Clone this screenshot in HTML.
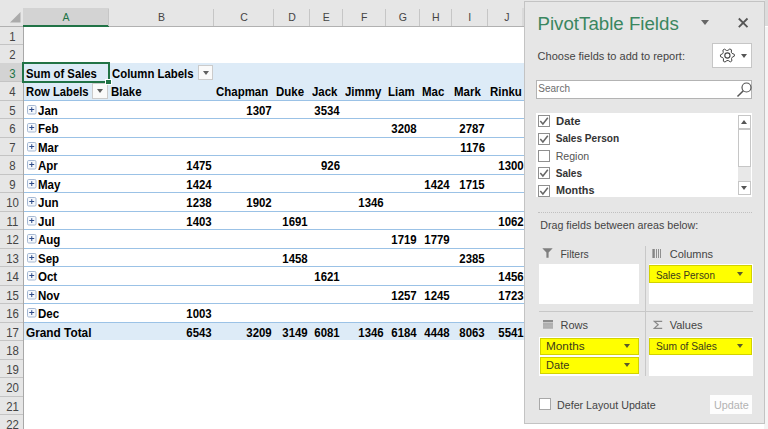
<!DOCTYPE html><html><head><meta charset="utf-8"><style>
*{margin:0;padding:0;box-sizing:border-box}
html,body{width:768px;height:429px;overflow:hidden;background:#fff;font-family:"Liberation Sans",sans-serif}
.a{position:absolute}
.t{position:absolute;white-space:nowrap;line-height:16px}
.b{font-weight:bold;color:#000}
.pt{color:#444}
.pb{position:absolute;width:9px;height:9px;border:1px solid #9fb3cf;border-radius:1.5px;background:#f7f9fc}
.pb:before{content:"";position:absolute;left:1px;top:3px;width:5px;height:1.5px;background:#2f4a85}
.pb:after{content:"";position:absolute;left:2.8px;top:1.2px;width:1.5px;height:5px;background:#2f4a85}
.dd{position:absolute;width:15.3px;height:15px;border:1px solid #cbcbcb;background:#fafafa}
.dd:after{content:"";position:absolute;left:3.6px;top:5px;border-left:3.4px solid transparent;border-right:3.4px solid transparent;border-top:4px solid #606060}
.cb{position:absolute;width:12px;height:12px;border:1px solid #8f8f8f;background:#fff}
.yi{position:absolute;background:#ffff00;border:1px solid #d2d200}
.tri{position:absolute;width:0;height:0;border-left:3.5px solid transparent;border-right:3.5px solid transparent;border-top:4px solid #555}
.wb{position:absolute;background:#fff}
</style></head><body><div class="a" style="left:0;top:0;width:768px;height:26px;background:#e6e6e6"></div>
<div class="a" style="left:0;top:26px;width:524px;height:1px;background:#b1b1b1"></div>
<div class="a" style="left:522px;top:8px;width:2px;height:18px;background:#dadada"></div>
<svg class="a" style="left:0;top:8px" width="23" height="18"><polygon points="20.5,4 20.5,14.5 10,14.5" fill="#ababab"/></svg>
<div class="a" style="left:23px;top:8px;width:86px;height:17px;background:#d3d3d3"></div>
<div class="a" style="left:23px;top:25px;width:86px;height:2px;background:#217346"></div>
<div class="t" style="left:23px;width:86px;text-align:center;top:9.26px;font-size:10.5px;color:#217346">A</div>
<div class="a" style="left:108px;top:9px;width:1px;height:17px;background:#c6c6c6"></div>
<div class="t" style="left:109px;width:105px;text-align:center;top:9.26px;font-size:10.5px;color:#444">B</div>
<div class="a" style="left:213px;top:9px;width:1px;height:17px;background:#c6c6c6"></div>
<div class="t" style="left:214px;width:60px;text-align:center;top:9.26px;font-size:10.5px;color:#444">C</div>
<div class="a" style="left:273px;top:9px;width:1px;height:17px;background:#c6c6c6"></div>
<div class="t" style="left:274px;width:36px;text-align:center;top:9.26px;font-size:10.5px;color:#444">D</div>
<div class="a" style="left:309px;top:9px;width:1px;height:17px;background:#c6c6c6"></div>
<div class="t" style="left:310px;width:32.5px;text-align:center;top:9.26px;font-size:10.5px;color:#444">E</div>
<div class="a" style="left:341.5px;top:9px;width:1px;height:17px;background:#c6c6c6"></div>
<div class="t" style="left:342.5px;width:43.5px;text-align:center;top:9.26px;font-size:10.5px;color:#444">F</div>
<div class="a" style="left:385px;top:9px;width:1px;height:17px;background:#c6c6c6"></div>
<div class="t" style="left:386px;width:33.5px;text-align:center;top:9.26px;font-size:10.5px;color:#444">G</div>
<div class="a" style="left:418.5px;top:9px;width:1px;height:17px;background:#c6c6c6"></div>
<div class="t" style="left:419.5px;width:32.5px;text-align:center;top:9.26px;font-size:10.5px;color:#444">H</div>
<div class="a" style="left:451px;top:9px;width:1px;height:17px;background:#c6c6c6"></div>
<div class="t" style="left:452px;width:35.5px;text-align:center;top:9.26px;font-size:10.5px;color:#444">I</div>
<div class="a" style="left:486.5px;top:9px;width:1px;height:17px;background:#c6c6c6"></div>
<div class="t" style="left:489.3px;width:35.0px;text-align:center;top:9.26px;font-size:10.5px;color:#444">J</div>
<div class="a" style="left:0;top:27px;width:23px;height:402px;background:#e6e6e6"></div>
<div class="a" style="left:23px;top:27px;width:1px;height:402px;background:#a8a8a8"></div>
<div class="a" style="left:0;top:44.00px;width:23px;height:1px;background:#c4c4c4"></div>
<div class="t" style="left:0.8px;width:23px;text-align:center;top:29.00px;font-size:12.4px;color:#444;transform:scaleX(0.92)">1</div>
<div class="a" style="left:0;top:63.00px;width:23px;height:1px;background:#c4c4c4"></div>
<div class="t" style="left:0.8px;width:23px;text-align:center;top:47.00px;font-size:12.4px;color:#444;transform:scaleX(0.92)">2</div>
<div class="a" style="left:0;top:63px;width:23px;height:18.48px;background:#d3d3d3"></div>
<div class="a" style="left:0;top:81.00px;width:23px;height:1px;background:#c4c4c4"></div>
<div class="t" style="left:0.8px;width:23px;text-align:center;top:66.00px;font-size:12.4px;color:#217346;transform:scaleX(0.92)">3</div>
<div class="a" style="left:0;top:100.00px;width:23px;height:1px;background:#c4c4c4"></div>
<div class="t" style="left:0.8px;width:23px;text-align:center;top:84.00px;font-size:12.4px;color:#444;transform:scaleX(0.92)">4</div>
<div class="a" style="left:0;top:118.00px;width:23px;height:1px;background:#c4c4c4"></div>
<div class="t" style="left:0.8px;width:23px;text-align:center;top:103.00px;font-size:12.4px;color:#444;transform:scaleX(0.92)">5</div>
<div class="a" style="left:0;top:137.00px;width:23px;height:1px;background:#c4c4c4"></div>
<div class="t" style="left:0.8px;width:23px;text-align:center;top:121.00px;font-size:12.4px;color:#444;transform:scaleX(0.92)">6</div>
<div class="a" style="left:0;top:155.00px;width:23px;height:1px;background:#c4c4c4"></div>
<div class="t" style="left:0.8px;width:23px;text-align:center;top:140.00px;font-size:12.4px;color:#444;transform:scaleX(0.92)">7</div>
<div class="a" style="left:0;top:174.00px;width:23px;height:1px;background:#c4c4c4"></div>
<div class="t" style="left:0.8px;width:23px;text-align:center;top:158.00px;font-size:12.4px;color:#444;transform:scaleX(0.92)">8</div>
<div class="a" style="left:0;top:192.00px;width:23px;height:1px;background:#c4c4c4"></div>
<div class="t" style="left:0.8px;width:23px;text-align:center;top:177.00px;font-size:12.4px;color:#444;transform:scaleX(0.92)">9</div>
<div class="a" style="left:0;top:211.00px;width:23px;height:1px;background:#c4c4c4"></div>
<div class="t" style="left:0.8px;width:23px;text-align:center;top:195.00px;font-size:12.4px;color:#444;transform:scaleX(0.92)">10</div>
<div class="a" style="left:0;top:229.00px;width:23px;height:1px;background:#c4c4c4"></div>
<div class="t" style="left:0.8px;width:23px;text-align:center;top:214.00px;font-size:12.4px;color:#444;transform:scaleX(0.92)">11</div>
<div class="a" style="left:0;top:248.00px;width:23px;height:1px;background:#c4c4c4"></div>
<div class="t" style="left:0.8px;width:23px;text-align:center;top:232.00px;font-size:12.4px;color:#444;transform:scaleX(0.92)">12</div>
<div class="a" style="left:0;top:266.00px;width:23px;height:1px;background:#c4c4c4"></div>
<div class="t" style="left:0.8px;width:23px;text-align:center;top:251.00px;font-size:12.4px;color:#444;transform:scaleX(0.92)">13</div>
<div class="a" style="left:0;top:285.00px;width:23px;height:1px;background:#c4c4c4"></div>
<div class="t" style="left:0.8px;width:23px;text-align:center;top:269.00px;font-size:12.4px;color:#444;transform:scaleX(0.92)">14</div>
<div class="a" style="left:0;top:303.00px;width:23px;height:1px;background:#c4c4c4"></div>
<div class="t" style="left:0.8px;width:23px;text-align:center;top:288.00px;font-size:12.4px;color:#444;transform:scaleX(0.92)">15</div>
<div class="a" style="left:0;top:322.00px;width:23px;height:1px;background:#c4c4c4"></div>
<div class="t" style="left:0.8px;width:23px;text-align:center;top:306.00px;font-size:12.4px;color:#444;transform:scaleX(0.92)">16</div>
<div class="a" style="left:0;top:340.00px;width:23px;height:1px;background:#c4c4c4"></div>
<div class="t" style="left:0.8px;width:23px;text-align:center;top:325.00px;font-size:12.4px;color:#444;transform:scaleX(0.92)">17</div>
<div class="a" style="left:0;top:359.00px;width:23px;height:1px;background:#c4c4c4"></div>
<div class="t" style="left:0.8px;width:23px;text-align:center;top:343.00px;font-size:12.4px;color:#444;transform:scaleX(0.92)">18</div>
<div class="a" style="left:0;top:377.00px;width:23px;height:1px;background:#c4c4c4"></div>
<div class="t" style="left:0.8px;width:23px;text-align:center;top:362.00px;font-size:12.4px;color:#444;transform:scaleX(0.92)">19</div>
<div class="a" style="left:0;top:396.00px;width:23px;height:1px;background:#c4c4c4"></div>
<div class="t" style="left:0.8px;width:23px;text-align:center;top:380.00px;font-size:12.4px;color:#444;transform:scaleX(0.92)">20</div>
<div class="a" style="left:0;top:414.00px;width:23px;height:1px;background:#c4c4c4"></div>
<div class="t" style="left:0.8px;width:23px;text-align:center;top:399.00px;font-size:12.4px;color:#444;transform:scaleX(0.92)">21</div>
<div class="a" style="left:0;top:433.00px;width:23px;height:1px;background:#c4c4c4"></div>
<div class="t" style="left:0.8px;width:23px;text-align:center;top:417.00px;font-size:12.4px;color:#444;transform:scaleX(0.92)">22</div>
<div class="a" style="left:24px;top:63.00px;width:500px;height:36.96px;background:#ddebf7"></div>
<div class="a" style="left:24px;top:322.00px;width:500px;height:18.48px;background:#ddebf7"></div>
<div class="a" style="left:24px;top:100.00px;width:500px;height:1px;background:#9bc2e6"></div>
<div class="a" style="left:24px;top:118.00px;width:500px;height:1px;background:#9bc2e6"></div>
<div class="a" style="left:24px;top:137.00px;width:500px;height:1px;background:#9bc2e6"></div>
<div class="a" style="left:24px;top:155.00px;width:500px;height:1px;background:#9bc2e6"></div>
<div class="a" style="left:24px;top:174.00px;width:500px;height:1px;background:#9bc2e6"></div>
<div class="a" style="left:24px;top:192.00px;width:500px;height:1px;background:#9bc2e6"></div>
<div class="a" style="left:24px;top:211.00px;width:500px;height:1px;background:#9bc2e6"></div>
<div class="a" style="left:24px;top:229.00px;width:500px;height:1px;background:#9bc2e6"></div>
<div class="a" style="left:24px;top:248.00px;width:500px;height:1px;background:#9bc2e6"></div>
<div class="a" style="left:24px;top:266.00px;width:500px;height:1px;background:#9bc2e6"></div>
<div class="a" style="left:24px;top:285.00px;width:500px;height:1px;background:#9bc2e6"></div>
<div class="a" style="left:24px;top:303.00px;width:500px;height:1px;background:#9bc2e6"></div>
<div class="a" style="left:24px;top:322.00px;width:500px;height:1px;background:#9bc2e6"></div>
<div class="t b" style="top:66.04px;font-size:12px;left:26.00px;transform:scaleX(0.94);transform-origin:left;">Sum of Sales</div>
<div class="t b" style="top:66.04px;font-size:12px;left:111.50px;transform:scaleX(0.948);transform-origin:left;">Column Labels</div>
<div class="dd" style="left:198px;top:65px"></div>
<div class="t b" style="top:84.04px;font-size:12px;left:26.00px;transform:scaleX(0.938);transform-origin:left;">Row Labels</div>
<div class="dd" style="left:92px;top:83px;width:15.8px;height:16px"></div>
<div class="t b" style="top:84.04px;font-size:12px;left:111.40px;transform:scaleX(0.955);transform-origin:left;">Blake</div>
<div class="t b" style="top:84.04px;font-size:12px;left:216.40px;transform:scaleX(0.955);transform-origin:left;">Chapman</div>
<div class="t b" style="top:84.04px;font-size:12px;left:276.40px;transform:scaleX(0.955);transform-origin:left;">Duke</div>
<div class="t b" style="top:84.04px;font-size:12px;left:312.40px;transform:scaleX(0.955);transform-origin:left;">Jack</div>
<div class="t b" style="top:84.04px;font-size:12px;left:344.90px;transform:scaleX(0.955);transform-origin:left;">Jimmy</div>
<div class="t b" style="top:84.04px;font-size:12px;left:388.40px;transform:scaleX(0.955);transform-origin:left;">Liam</div>
<div class="t b" style="top:84.04px;font-size:12px;left:421.90px;transform:scaleX(0.955);transform-origin:left;">Mac</div>
<div class="t b" style="top:84.04px;font-size:12px;left:454.40px;transform:scaleX(0.955);transform-origin:left;">Mark</div>
<div class="t b" style="top:84.04px;font-size:12px;left:489.90px;transform:scaleX(0.955);transform-origin:left;">Rinku</div>
<svg class="a" style="left:27px;top:105px" width="10" height="10"><rect x="0.5" y="0.5" width="8.5" height="8.5" rx="1.2" fill="#f5f8fc" stroke="#a5b8d3" stroke-width="1"/><path d="M2.3 4.5H7.2M4.75 2.2V7" stroke="#2d4a88" stroke-width="1"/></svg>
<div class="t b" style="top:103.04px;font-size:12px;left:38.00px;transform:scaleX(0.96);transform-origin:left;">Jan</div>
<div class="t b" style="top:103.04px;font-size:12px;right:496.75px;transform:scaleX(0.95);transform-origin:right;">1307</div>
<div class="t b" style="top:103.04px;font-size:12px;right:428.25px;transform:scaleX(0.95);transform-origin:right;">3534</div>
<svg class="a" style="left:27px;top:123px" width="10" height="10"><rect x="0.5" y="0.5" width="8.5" height="8.5" rx="1.2" fill="#f5f8fc" stroke="#a5b8d3" stroke-width="1"/><path d="M2.3 4.5H7.2M4.75 2.2V7" stroke="#2d4a88" stroke-width="1"/></svg>
<div class="t b" style="top:121.04px;font-size:12px;left:38.00px;transform:scaleX(0.96);transform-origin:left;">Feb</div>
<div class="t b" style="top:121.04px;font-size:12px;right:351.25px;transform:scaleX(0.95);transform-origin:right;">3208</div>
<div class="t b" style="top:121.04px;font-size:12px;right:283.25px;transform:scaleX(0.95);transform-origin:right;">2787</div>
<svg class="a" style="left:27px;top:142px" width="10" height="10"><rect x="0.5" y="0.5" width="8.5" height="8.5" rx="1.2" fill="#f5f8fc" stroke="#a5b8d3" stroke-width="1"/><path d="M2.3 4.5H7.2M4.75 2.2V7" stroke="#2d4a88" stroke-width="1"/></svg>
<div class="t b" style="top:140.04px;font-size:12px;left:38.00px;transform:scaleX(0.96);transform-origin:left;">Mar</div>
<div class="t b" style="top:140.04px;font-size:12px;right:283.25px;transform:scaleX(0.95);transform-origin:right;">1176</div>
<svg class="a" style="left:27px;top:160px" width="10" height="10"><rect x="0.5" y="0.5" width="8.5" height="8.5" rx="1.2" fill="#f5f8fc" stroke="#a5b8d3" stroke-width="1"/><path d="M2.3 4.5H7.2M4.75 2.2V7" stroke="#2d4a88" stroke-width="1"/></svg>
<div class="t b" style="top:158.04px;font-size:12px;left:38.00px;transform:scaleX(0.96);transform-origin:left;">Apr</div>
<div class="t b" style="top:158.04px;font-size:12px;right:556.75px;transform:scaleX(0.95);transform-origin:right;">1475</div>
<div class="t b" style="top:158.04px;font-size:12px;right:428.25px;transform:scaleX(0.95);transform-origin:right;">926</div>
<div class="t b" style="top:158.04px;font-size:12px;right:244.25px;transform:scaleX(0.95);transform-origin:right;">1300</div>
<svg class="a" style="left:27px;top:179px" width="10" height="10"><rect x="0.5" y="0.5" width="8.5" height="8.5" rx="1.2" fill="#f5f8fc" stroke="#a5b8d3" stroke-width="1"/><path d="M2.3 4.5H7.2M4.75 2.2V7" stroke="#2d4a88" stroke-width="1"/></svg>
<div class="t b" style="top:177.04px;font-size:12px;left:38.00px;transform:scaleX(0.96);transform-origin:left;">May</div>
<div class="t b" style="top:177.04px;font-size:12px;right:556.75px;transform:scaleX(0.95);transform-origin:right;">1424</div>
<div class="t b" style="top:177.04px;font-size:12px;right:318.75px;transform:scaleX(0.95);transform-origin:right;">1424</div>
<div class="t b" style="top:177.04px;font-size:12px;right:283.25px;transform:scaleX(0.95);transform-origin:right;">1715</div>
<svg class="a" style="left:27px;top:197px" width="10" height="10"><rect x="0.5" y="0.5" width="8.5" height="8.5" rx="1.2" fill="#f5f8fc" stroke="#a5b8d3" stroke-width="1"/><path d="M2.3 4.5H7.2M4.75 2.2V7" stroke="#2d4a88" stroke-width="1"/></svg>
<div class="t b" style="top:195.04px;font-size:12px;left:38.00px;transform:scaleX(0.96);transform-origin:left;">Jun</div>
<div class="t b" style="top:195.04px;font-size:12px;right:556.75px;transform:scaleX(0.95);transform-origin:right;">1238</div>
<div class="t b" style="top:195.04px;font-size:12px;right:496.75px;transform:scaleX(0.95);transform-origin:right;">1902</div>
<div class="t b" style="top:195.04px;font-size:12px;right:384.75px;transform:scaleX(0.95);transform-origin:right;">1346</div>
<svg class="a" style="left:27px;top:216px" width="10" height="10"><rect x="0.5" y="0.5" width="8.5" height="8.5" rx="1.2" fill="#f5f8fc" stroke="#a5b8d3" stroke-width="1"/><path d="M2.3 4.5H7.2M4.75 2.2V7" stroke="#2d4a88" stroke-width="1"/></svg>
<div class="t b" style="top:214.04px;font-size:12px;left:38.00px;transform:scaleX(0.96);transform-origin:left;">Jul</div>
<div class="t b" style="top:214.04px;font-size:12px;right:556.75px;transform:scaleX(0.95);transform-origin:right;">1403</div>
<div class="t b" style="top:214.04px;font-size:12px;right:460.75px;transform:scaleX(0.95);transform-origin:right;">1691</div>
<div class="t b" style="top:214.04px;font-size:12px;right:244.25px;transform:scaleX(0.95);transform-origin:right;">1062</div>
<svg class="a" style="left:27px;top:234px" width="10" height="10"><rect x="0.5" y="0.5" width="8.5" height="8.5" rx="1.2" fill="#f5f8fc" stroke="#a5b8d3" stroke-width="1"/><path d="M2.3 4.5H7.2M4.75 2.2V7" stroke="#2d4a88" stroke-width="1"/></svg>
<div class="t b" style="top:232.04px;font-size:12px;left:38.00px;transform:scaleX(0.96);transform-origin:left;">Aug</div>
<div class="t b" style="top:232.04px;font-size:12px;right:351.25px;transform:scaleX(0.95);transform-origin:right;">1719</div>
<div class="t b" style="top:232.04px;font-size:12px;right:318.75px;transform:scaleX(0.95);transform-origin:right;">1779</div>
<svg class="a" style="left:27px;top:253px" width="10" height="10"><rect x="0.5" y="0.5" width="8.5" height="8.5" rx="1.2" fill="#f5f8fc" stroke="#a5b8d3" stroke-width="1"/><path d="M2.3 4.5H7.2M4.75 2.2V7" stroke="#2d4a88" stroke-width="1"/></svg>
<div class="t b" style="top:251.04px;font-size:12px;left:38.00px;transform:scaleX(0.96);transform-origin:left;">Sep</div>
<div class="t b" style="top:251.04px;font-size:12px;right:460.75px;transform:scaleX(0.95);transform-origin:right;">1458</div>
<div class="t b" style="top:251.04px;font-size:12px;right:283.25px;transform:scaleX(0.95);transform-origin:right;">2385</div>
<svg class="a" style="left:27px;top:271px" width="10" height="10"><rect x="0.5" y="0.5" width="8.5" height="8.5" rx="1.2" fill="#f5f8fc" stroke="#a5b8d3" stroke-width="1"/><path d="M2.3 4.5H7.2M4.75 2.2V7" stroke="#2d4a88" stroke-width="1"/></svg>
<div class="t b" style="top:269.04px;font-size:12px;left:38.00px;transform:scaleX(0.96);transform-origin:left;">Oct</div>
<div class="t b" style="top:269.04px;font-size:12px;right:428.25px;transform:scaleX(0.95);transform-origin:right;">1621</div>
<div class="t b" style="top:269.04px;font-size:12px;right:244.25px;transform:scaleX(0.95);transform-origin:right;">1456</div>
<svg class="a" style="left:27px;top:290px" width="10" height="10"><rect x="0.5" y="0.5" width="8.5" height="8.5" rx="1.2" fill="#f5f8fc" stroke="#a5b8d3" stroke-width="1"/><path d="M2.3 4.5H7.2M4.75 2.2V7" stroke="#2d4a88" stroke-width="1"/></svg>
<div class="t b" style="top:288.04px;font-size:12px;left:38.00px;transform:scaleX(0.96);transform-origin:left;">Nov</div>
<div class="t b" style="top:288.04px;font-size:12px;right:351.25px;transform:scaleX(0.95);transform-origin:right;">1257</div>
<div class="t b" style="top:288.04px;font-size:12px;right:318.75px;transform:scaleX(0.95);transform-origin:right;">1245</div>
<div class="t b" style="top:288.04px;font-size:12px;right:244.25px;transform:scaleX(0.95);transform-origin:right;">1723</div>
<svg class="a" style="left:27px;top:308px" width="10" height="10"><rect x="0.5" y="0.5" width="8.5" height="8.5" rx="1.2" fill="#f5f8fc" stroke="#a5b8d3" stroke-width="1"/><path d="M2.3 4.5H7.2M4.75 2.2V7" stroke="#2d4a88" stroke-width="1"/></svg>
<div class="t b" style="top:306.04px;font-size:12px;left:38.00px;transform:scaleX(0.96);transform-origin:left;">Dec</div>
<div class="t b" style="top:306.04px;font-size:12px;right:556.75px;transform:scaleX(0.95);transform-origin:right;">1003</div>
<div class="t b" style="top:325.04px;font-size:12px;left:26.00px;transform:scaleX(0.985);transform-origin:left;">Grand Total</div>
<div class="t b" style="top:325.04px;font-size:12px;right:556.75px;transform:scaleX(0.95);transform-origin:right;">6543</div>
<div class="t b" style="top:325.04px;font-size:12px;right:496.75px;transform:scaleX(0.95);transform-origin:right;">3209</div>
<div class="t b" style="top:325.04px;font-size:12px;right:460.75px;transform:scaleX(0.95);transform-origin:right;">3149</div>
<div class="t b" style="top:325.04px;font-size:12px;right:428.25px;transform:scaleX(0.95);transform-origin:right;">6081</div>
<div class="t b" style="top:325.04px;font-size:12px;right:384.75px;transform:scaleX(0.95);transform-origin:right;">1346</div>
<div class="t b" style="top:325.04px;font-size:12px;right:351.25px;transform:scaleX(0.95);transform-origin:right;">6184</div>
<div class="t b" style="top:325.04px;font-size:12px;right:318.75px;transform:scaleX(0.95);transform-origin:right;">4448</div>
<div class="t b" style="top:325.04px;font-size:12px;right:283.25px;transform:scaleX(0.95);transform-origin:right;">8063</div>
<div class="t b" style="top:325.04px;font-size:12px;right:244.25px;transform:scaleX(0.95);transform-origin:right;">5541</div>
<div class="a" style="left:22px;top:62px;width:88px;height:21px;border:2px solid #217346"></div>
<div class="a" style="left:105px;top:79px;width:7px;height:6px;background:#217346;border:1px solid #fff"></div>
<div class="a" style="left:764px;top:27px;width:4px;height:402px;background:#f4f4f4"></div>
<div class="a" style="left:765px;top:0;width:3px;height:26px;background:#dcdcdc"></div>
<div class="a" style="left:524px;top:1px;width:241px;height:423px;background:#e6e6e6;border:1px solid #c3c3c3"></div>
<div class="t" style="top:16.12px;font-size:18.7px;left:537.50px;color:#3a8660">PivotTable Fields</div>
<div class="tri" style="left:701px;top:20px;border-left-width:4px;border-right-width:4px;border-top-width:5px;border-top-color:#666"></div>
<svg class="a" style="left:737px;top:16.5px" width="12" height="12"><path d="M1.8 1.5L10.5 10.2M10.5 1.5L1.8 10.2" stroke="#555" stroke-width="1.8"/></svg>
<div class="t pt" style="top:48.39px;font-size:11px;left:537.60px;">Choose fields to add to report:</div>
<div class="a" style="left:712px;top:43px;width:40px;height:25px;background:#fff;border:1px solid #c6c6c6"></div>
<svg class="a" style="left:719px;top:47px" width="17" height="17"><polygon points="15.30,7.31 15.37,9.14 13.18,10.27 12.56,11.44 12.88,13.88 11.33,14.86 9.26,13.53 7.93,13.58 5.98,15.07 4.36,14.22 4.48,11.76 3.77,10.64 1.50,9.69 1.43,7.86 3.62,6.73 4.24,5.56 3.92,3.12 5.47,2.14 7.54,3.47 8.87,3.42 10.82,1.93 12.44,2.78 12.32,5.24 13.03,6.36" fill="none" stroke="#444" stroke-width="1" stroke-linejoin="round"/><circle cx="8.399999999999977" cy="8.5" r="2.6" fill="none" stroke="#444" stroke-width="1.1"/></svg>
<div class="tri" style="left:741px;top:54.3px;border-top-color:#555"></div>
<div class="a" style="left:536px;top:80px;width:216px;height:19px;background:#fff;border:1px solid #b3b3b3"></div>
<div class="t" style="top:81.44px;font-size:10px;left:538.30px;color:#6d6d6d">Search</div>
<svg class="a" style="left:736px;top:80.5px" width="16" height="17"><circle cx="10.5" cy="6.5" r="4.5" fill="none" stroke="#555" stroke-width="1.2"/><path d="M7.3 9.7 L1.5 15.5" stroke="#555" stroke-width="1.5"/></svg>
<div class="wb" style="left:536px;top:113px;width:216px;height:84px"></div>
<div class="cb" style="left:538px;top:115.20px"></div>
<svg class="a" style="left:538px;top:115.20px" width="12" height="12"><path d="M2.3 6 L4.9 9 L9.8 2.8" fill="none" stroke="#666" stroke-width="1.5"/></svg>
<div class="t" style="top:113.80px;font-size:10.1px;left:555.70px;transform:scaleX(1.12);transform-origin:left;font-weight:bold;color:#333">Date</div>
<div class="cb" style="left:538px;top:132.53px"></div>
<svg class="a" style="left:538px;top:132.53px" width="12" height="12"><path d="M2.3 6 L4.9 9 L9.8 2.8" fill="none" stroke="#666" stroke-width="1.5"/></svg>
<div class="t" style="top:131.15px;font-size:10.1px;left:555.70px;font-weight:bold;color:#333">Sales Person</div>
<div class="cb" style="left:538px;top:149.86px"></div>
<div class="t" style="top:148.33px;font-size:10.6px;left:555.70px;color:#555">Region</div>
<div class="cb" style="left:538px;top:167.19px"></div>
<svg class="a" style="left:538px;top:167.19px" width="12" height="12"><path d="M2.3 6 L4.9 9 L9.8 2.8" fill="none" stroke="#666" stroke-width="1.5"/></svg>
<div class="t" style="top:165.85px;font-size:10.1px;left:555.70px;font-weight:bold;color:#333">Sales</div>
<div class="cb" style="left:538px;top:184.52px"></div>
<svg class="a" style="left:538px;top:184.52px" width="12" height="12"><path d="M2.3 6 L4.9 9 L9.8 2.8" fill="none" stroke="#666" stroke-width="1.5"/></svg>
<div class="t" style="top:183.20px;font-size:10.1px;left:555.70px;transform:scaleX(1.07);transform-origin:left;font-weight:bold;color:#333">Months</div>
<div class="a" style="left:738px;top:115px;width:13px;height:80px;background:#e8e8e8"></div>
<div class="a" style="left:738px;top:115px;width:13px;height:14px;background:#fff;border:1px solid #c6c6c6"></div>
<div class="a" style="left:741px;top:120px;width:0;height:0;border-left:3.5px solid transparent;border-right:3.5px solid transparent;border-bottom:4px solid #555"></div>
<div class="a" style="left:738px;top:129px;width:13px;height:38px;background:#fff;border:1px solid #c6c6c6"></div>
<div class="a" style="left:738px;top:181px;width:13px;height:14px;background:#fff;border:1px solid #c6c6c6"></div>
<div class="tri" style="left:741px;top:186px"></div>
<div class="a" style="left:538px;top:212px;width:214px;height:0;border-top:1px dotted #c0c0c0"></div>
<div class="t pt" style="top:216.59px;font-size:10.7px;left:540.20px;">Drag fields between areas below:</div>
<div class="t pt" style="top:246.80px;font-size:10.4px;left:560.50px;">Filters</div>
<div class="t pt" style="top:246.29px;font-size:11px;left:669.70px;">Columns</div>
<div class="t pt" style="top:316.99px;font-size:11px;left:560.50px;">Rows</div>
<div class="t pt" style="top:316.99px;font-size:11px;left:669.70px;">Values</div>
<svg class="a" style="left:542px;top:248px" width="11" height="10"><path d="M0.3 0.3 H10.7 L6.6 4.6 V9.8 L4.4 9.8 V4.6 Z" fill="#7f7f7f"/></svg>
<svg class="a" style="left:652px;top:249px" width="10" height="9"><rect x="0.4" y="0" width="2.4" height="9" fill="#858585"/><rect x="4" y="0" width="1" height="9" fill="#8f8f8f"/><rect x="6" y="0" width="1" height="9" fill="#8f8f8f"/><rect x="8" y="0" width="1" height="9" fill="#8f8f8f"/></svg>
<svg class="a" style="left:543px;top:320px" width="10" height="9"><rect x="0" y="0" width="10" height="2.2" fill="#8c8c8c"/><rect x="0" y="2.2" width="10" height="6" fill="#c4c4c4"/><rect x="0" y="3.5" width="10" height="1" fill="#9a9a9a"/><rect x="0" y="5.5" width="10" height="1" fill="#a0a0a0"/><rect x="0" y="7.5" width="10" height="1" fill="#9a9a9a"/></svg>
<svg class="a" style="left:652.5px;top:319.5px" width="10" height="10"><path d="M9.2 1.3 H1.2 L5.2 4.8 L1.2 8.4 H9.2" fill="none" stroke="#888" stroke-width="1.2"/></svg>
<div class="wb" style="left:539px;top:264px;width:100px;height:40px"></div>
<div class="wb" style="left:649px;top:264px;width:103.5px;height:40px"></div>
<div class="wb" style="left:539px;top:336.5px;width:100px;height:39px"></div>
<div class="wb" style="left:649px;top:336.5px;width:103.5px;height:39px"></div>
<div class="a" style="left:645px;top:246px;width:1px;height:130px;background:#c8c8c8"></div>
<div class="a" style="left:538.5px;top:310.5px;width:214px;height:1px;background:#c8c8c8"></div>
<div class="yi" style="left:649.4px;top:265px;width:103px;height:18px"></div>
<div class="t" style="top:267.19px;font-size:11px;left:655.50px;transform:scaleX(0.9);transform-origin:left;color:#3a3a1a">Sales Person</div>
<div class="tri" style="left:737.10px;top:272.30px;border-top-color:#5a5a2a"></div>
<div class="yi" style="left:540px;top:338px;width:99px;height:16.5px"></div>
<div class="t" style="top:338.19px;font-size:11px;left:546.10px;transform:scaleX(1.07);transform-origin:left;color:#3a3a1a">Months</div>
<div class="tri" style="left:623.70px;top:344.00px;border-top-color:#5a5a2a"></div>
<div class="yi" style="left:540px;top:357px;width:99px;height:17px"></div>
<div class="t" style="top:357.19px;font-size:11px;left:546.10px;transform:scaleX(1.0);transform-origin:left;color:#3a3a1a">Date</div>
<div class="tri" style="left:623.70px;top:363.00px;border-top-color:#5a5a2a"></div>
<div class="yi" style="left:649.4px;top:338px;width:103px;height:16.5px"></div>
<div class="t" style="top:338.19px;font-size:11px;left:655.50px;transform:scaleX(0.93);transform-origin:left;color:#3a3a1a">Sum of Sales</div>
<div class="tri" style="left:737.10px;top:344.00px;border-top-color:#5a5a2a"></div>
<div class="cb" style="left:538.5px;top:398px;border-color:#a8a8a8"></div>
<div class="t pt" style="top:397.09px;font-size:10.7px;left:557.00px;">Defer Layout Update</div>
<div class="a" style="left:710px;top:395px;width:42px;height:19px;background:#fdfdfd"></div>
<div class="t" style="top:396.66px;font-size:10.5px;left:713.80px;transform:scaleX(1.03);transform-origin:left;color:#b3b3b3">Update</div></body></html>
